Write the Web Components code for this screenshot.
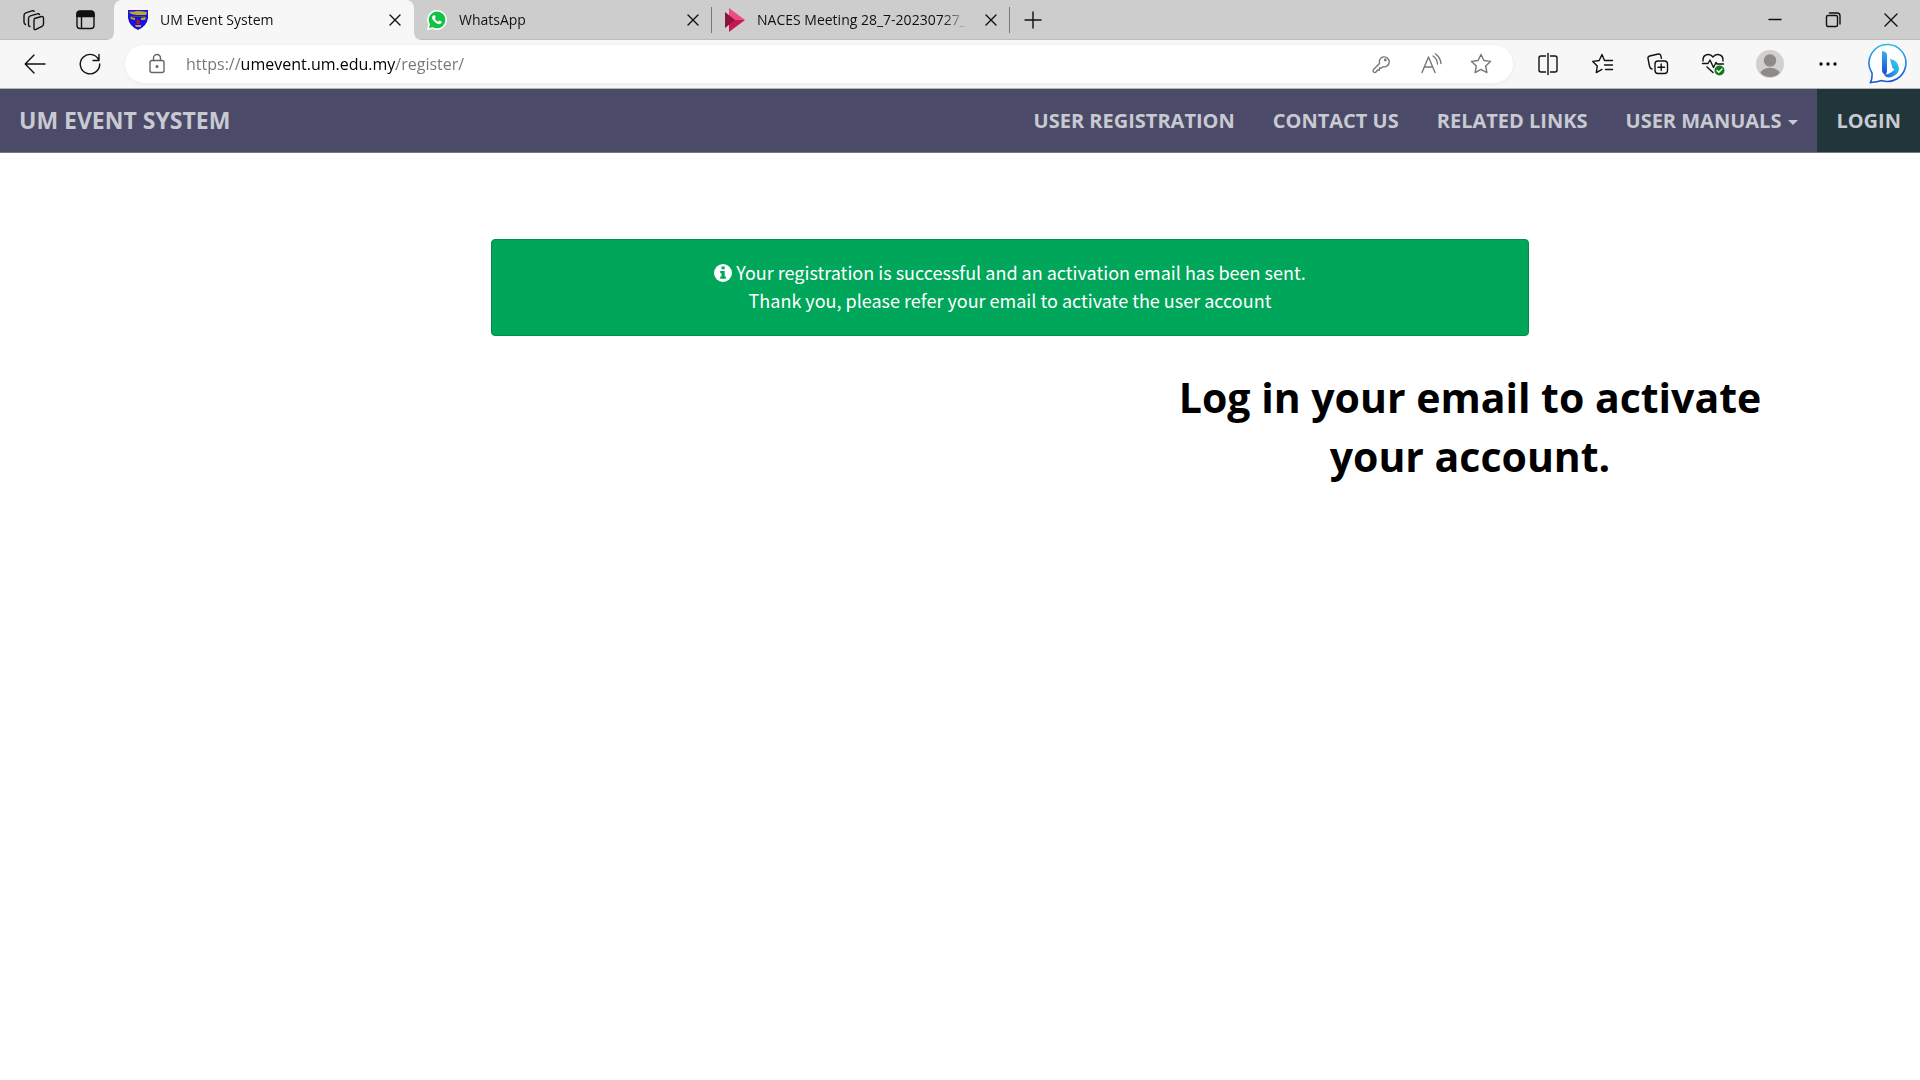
<!DOCTYPE html>
<html lang="en">
<head>
<meta charset="utf-8">
<title>UM Event System</title>
<style>
  body {
    margin: 0;
    background: #fff;
    font-family: "Open Sans", "Noto Sans", sans-serif;
  }
</style>
</head>
<body>
<um-browser>
  <um-tab slot="tab" label="UM Event System" active>
    <svg slot="icon" width="20" height="20" viewBox="0 0 20 20">
      <path fill="#fff" d="M0 0h20v20H0z"/>
      <path fill="#1a12e0" d="M0 0h20v8q-1 8-10 12Q1 16 0 8z"/>
      <path fill="#b9ad1c" d="M1 1.500q4 .5 8-.5 5 0 10 1l-1 3H9L3 4zM2 7l5 1v2L3 9zM13 8l5-1-1 3h-4zM7 15h6v2H8z"/>
      <path fill="#c0182a" d="M8.500 10h3v4h-3z"/>
      <path fill="#4a4a50" d="M3 6h14v1H3z"/>
    </svg>
  </um-tab>
  <um-tab slot="tab" label="WhatsApp">
    <svg slot="icon" width="20" height="20" viewBox="0 0 20 20">
      <path fill="#fff" d="M10 0a10 10 0 1 1-4.600 18.900L0 20l1.300-5.200A10 10 0 0 1 10 0z"/>
      <path fill="#12c245" d="M10 1.500a8.400 8.400 0 1 1-4.200 15.700L2 18.100l1-3.800A8.400 8.400 0 0 1 10 1.500z"/>
      <path fill="#fff" d="M6.600 5.200q.8-.6 1.300.2l.8 1.900-.9 1.300q1 2.200 3.300 3.100l1.200-1.300 2.400 1.200q.3 2-2 2.500-1.600.3-4.300-1.500-3-2.200-3.400-4.600-.1-1.700 1.600-2.800z"/>
    </svg>
  </um-tab>
  <um-tab slot="tab" label="NACES Meeting 28_7-20230727_">
    <svg slot="icon" width="20" height="24" viewBox="0 0 20 24">
      <path fill="#f04a80" d="M4 0l16 12H4z"/>
      <path fill="#c41a50" d="M4 24l16-12H4z"/>
      <path fill="#8e1440" d="M0 4l10 8-10 8z"/>
    </svg>
  </um-tab>
</um-browser>
<um-navbar>
  <a slot="brand" href="#">UM EVENT SYSTEM</a>
  <um-nav-item>USER REGISTRATION</um-nav-item>
  <um-nav-item>CONTACT US</um-nav-item>
  <um-nav-item>RELATED LINKS</um-nav-item>
  <um-nav-item dropdown>USER MANUALS</um-nav-item>
  <um-nav-item highlight>LOGIN</um-nav-item>
</um-navbar>
<main>
  <um-alert>Your registration is successful and an activation email has been sent.<br>Thank you, please refer your email to activate the user account</um-alert>
  <um-note>Log in your email to activate<br>your account.</um-note>
</main>

<script>
/**
 * Build a template from markup.
 *
 * @param {string} html - Markup and styles of the shadow root.
 * @return {HTMLTemplateElement}
 */
function createTemplate(html) {
  const template = document.createElement("template");
  template.innerHTML = html;
  return template;
}

/** Base class: clones the template of the subclass into an open shadow root. */
class BaseElement extends HTMLElement {
  constructor() {
    super();
    this.root = this.attachShadow({ mode: "open" });
    this.root.appendChild(this.constructor.template.content.cloneNode(true));
  }
}

/** @const {Object} - Icon shapes, all drawn on a 24px grid. */
const ICONS = {
  workspaces: `<path d="M13.500 10.500l7-2q2-.4 2 1.600v6q0 1.600-1.500 2.300l-6 3q-2 .9-2-1.200v-7.700q0-1.600 .5-2zM9 18.500Q7.500 18.500 7.500 16.500v-6q0-2 1.800-2.700l7-2q1.500-.4 2.200 .700M4.500 16.500Q3 16 3 14V7.500q0-2 1.800-2.700l6.200-2q1.500-.4 2.200 .5"/>`,
  verticalTabs: `<rect x="3" y="3.500" width="17" height="17" rx="3"/><path d="M7.500 8v12M3 8.500h17"/><path d="M3 8V6q0-3 3-3h11q3 0 3 3v2z" fill="currentColor"/>`,
  back: `<path d="M22 12H2.500M11 3l-8.800 9 8.800 9"/>`,
  reload: `<path d="M21 8.500A9.700 9.700 0 1 0 21.700 12M21 2.500v6h-6"/>`,
  lock: `<rect x="5" y="8.500" width="14" height="12" rx="2"/><path d="M8.500 8.500V6a3.500 3.500 0 0 1 7 0v2.500"/><circle cx="12" cy="14.500" r=".8" fill="currentColor"/>`,
  key: `<path d="M10.500 11.500a5 5 0 1 1 3.500 3.200l-1.500 1.300h-2v2h-2l-1.500 2q-1 1-2.500 0-1-1.500 0-2.500z"/><circle cx="16.300" cy="8" r=".7"/>`,
  readAloud: `<path d="M3 20.500L9.500 5 16 20.500M5.500 15h8M14 4q4 2.500 4.500 8M16.500 2q5 3.500 5.500 9.500"/>`,
  star: `<path d="M12 2.500l2.900 6 6.600.9-4.800 4.600 1.200 6.600-5.900-3.200-5.900 3.200L7.300 14 2.500 9.400l6.600-.9z"/>`,
  split: `<path d="M12 1.500v21M9.500 4H5Q3 4 3 6v12q0 2 2 2h4.500M14.500 4H19q2 0 2 2v12q0 2-2 2h-4.500"/>`,
  favorites: `<path d="M14 8.500h-.5L11 2.500 8.200 8.500 1.700 9.400 6.300 14l-1 6.600 5.700-3.200M14 8.500h7.500M13.500 13h8M14.500 17.500h7"/>`,
  collections: `<rect x="9" y="9" width="12.500" height="12.500" rx="3"/><path d="M15.200 12v6.500M12 15.200h6.500M6 17Q4 16.500 3.600 14.500L2 6.500Q1.700 4.500 3.700 4l8.500-2q2-.4 2.600 1.600l.6 2.700"/>`,
  health: `<path d="M2 9q-.5-6 5-6.500Q10 2.300 12 5q2-2.700 5-2.500 5.500.5 5 6.500M1.500 11.500H7l2-3.500 3.500 7.500 2.500-5 1 1.500h6.500M6 15l6 5.500"/><circle cx="18.500" cy="18.500" r="5" fill="#127a18" stroke="none"/><path d="M16 18.500l1.800 1.800L21 17" stroke="#fff"/>`,
  more: `<g fill="currentColor" stroke="none"><circle cx="5" cy="12" r="1.700"/><circle cx="12" cy="12" r="1.700"/><circle cx="19" cy="12" r="1.700"/></g>`,
  close: `<path d="M7 7l10 10M17 7L7 17"/>`,
  add: `<path d="M12 4v16M4 12h16"/>`,
  minimize: `<path d="M6 11.500h12"/>`,
  restore: `<rect x="5.500" y="7.500" width="11" height="11" rx="1.500"/><path d="M8.500 5h7.500q3 0 3 3v8"/>`,
  windowClose: `<path d="M6 6l12 12M18 6L6 18"/>`
};

/** Line icon, chosen by its name attribute. */
class Icon extends BaseElement {
  static template = createTemplate(`
    <style>
      :host {
        display: block;
        width: 24px;
        height: 24px;
      }

      svg {
        display: block;
        fill: none;
        stroke: currentColor;
        stroke-width: 1.4;
        stroke-linecap: round;
        stroke-linejoin: round;
      }
    </style>
    <svg width="24" height="24" viewBox="0 0 24 24" aria-hidden="true"></svg>
  `);

  connectedCallback() {
    this.root.querySelector("svg").innerHTML = ICONS[this.getAttribute("name")];
  }
}

/** Browser tab with icon, title and close button. */
class Tab extends BaseElement {
  static template = createTemplate(`
    <style>
      :host {
        position: relative;
        box-sizing: border-box;
        display: flex;
        align-items: center;
        gap: 12px;
        flex: 0 1 298px;
        min-width: 0;
        height: 40px;
        padding: 0 6px 0 13px;
      }

      :host([active]) {
        flex-basis: 300px;
        padding: 0 7px 0 14px;
        border-radius: 8px 8px 0 0;
        background: #f7f7f7;
      }

      /* Flared feet of the active tab. */
      :host([active])::before,
      :host([active])::after {
        content: "";
        position: absolute;
        bottom: 0;
        width: 6px;
        height: 6px;
      }

      :host([active])::before {
        right: 100%;
        background: radial-gradient(circle at 0 0, #cdcdcd 5px, #f7f7f7 6px);
      }

      :host([active])::after {
        left: 100%;
        background: radial-gradient(circle at 100% 0, #cdcdcd 5px, #f7f7f7 6px);
      }

      :host(:not([active])) {
        border-right: 1px solid transparent;
        border-image: linear-gradient(transparent 20%, #777 20%, #777 80%, transparent 80%) 1;
      }

      .title {
        flex: 1;
        overflow: hidden;
        white-space: nowrap;
        font-size: 14px;
        line-height: 24px;
        color: #111;
        -webkit-mask-image: linear-gradient(90deg, #000 calc(100% - 24px), transparent);
      }

      button {
        padding: 0;
        border: 0;
        background: none;
        color: #111;
      }
    </style>
    <slot name="icon"></slot>
    <span class="title"></span>
    <button aria-label="Close tab"><um-icon name="close"></um-icon></button>
  `);

  connectedCallback() {
    this.root.querySelector(".title").textContent = this.getAttribute("label");
  }
}

/** Window frame: the tab strip and the toolbar with the address bar. */
class Browser extends BaseElement {
  static template = createTemplate(`
    <style>
      :host {
        display: block;
        border-bottom: 1px solid #b4b4b4;
        background: #f7f7f7;
      }

      .strip,
      .toolbar,
      .address,
      button {
        display: flex;
        align-items: center;
      }

      button {
        flex: none;
        justify-content: center;
        width: 55px;
        height: 40px;
        padding: 0;
        border: 0;
        background: none;
        color: #111;
      }

      .strip {
        height: 40px;
        background: #cdcdcd;
        box-shadow: inset 0 -1px #bdbdbd;
      }

      .actions {
        display: flex;
        box-sizing: border-box;
        width: 114px;
        padding-left: 6px;
      }

      .actions button {
        width: 53px;
      }

      .add {
        width: 46px;
      }

      .window {
        display: flex;
        margin-left: auto;
      }

      .window button {
        width: 58px;
      }

      .toolbar {
        height: 48px;
        padding-left: 7px;
      }

      .address {
        flex: 1;
        height: 38px;
        margin: 0 7px 0 8px;
        padding: 0 7px 0 20px;
        border-radius: 19px;
        background: #fff;
        box-shadow: 0 1px 4px #0000000f;
        color: #666;
      }

      .address um-icon {
        flex: none;
      }

      .address button {
        width: 50px;
        color: #777;
      }

      /* The host name stands out darker than the scheme and the path. */
      input {
        flex: 1;
        min-width: 0;
        margin-left: 17px;
        padding: 0;
        border: 0;
        outline: 0;
        font: 16px/24px "Open Sans", "Noto Sans", sans-serif;
        color: #757575;
        background: linear-gradient(90deg, #757575 55px, #000 55px, #000 210px, #757575 210px);
        -webkit-background-clip: text;
        background-clip: text;
        -webkit-text-fill-color: transparent;
      }

      .profile {
        width: 60px;
      }

      .bing {
        width: 65px;
      }
    </style>
    <div class="strip">
      <div class="actions">
        <button aria-label="Workspaces"><um-icon name="workspaces"></um-icon></button>
        <button aria-label="Tab actions"><um-icon name="verticalTabs"></um-icon></button>
      </div>
      <slot name="tab"></slot>
      <button class="add" aria-label="New tab"><um-icon name="add"></um-icon></button>
      <div class="window">
        <button aria-label="Minimize"><um-icon name="minimize"></um-icon></button>
        <button aria-label="Restore"><um-icon name="restore"></um-icon></button>
        <button aria-label="Close"><um-icon name="windowClose"></um-icon></button>
      </div>
    </div>
    <div class="toolbar">
      <button aria-label="Back"><um-icon name="back"></um-icon></button>
      <button aria-label="Refresh"><um-icon name="reload"></um-icon></button>
      <div class="address">
        <um-icon name="lock"></um-icon>
        <input type="text" aria-label="Address" value="https://umevent.um.edu.my/register/" spellcheck="false">
        <button aria-label="Passwords"><um-icon name="key"></um-icon></button>
        <button aria-label="Read aloud"><um-icon name="readAloud"></um-icon></button>
        <button aria-label="Add to favorites"><um-icon name="star"></um-icon></button>
      </div>
      <button aria-label="Split screen"><um-icon name="split"></um-icon></button>
      <button aria-label="Favorites"><um-icon name="favorites"></um-icon></button>
      <button aria-label="Collections"><um-icon name="collections"></um-icon></button>
      <button aria-label="Browser essentials"><um-icon name="health"></um-icon></button>
      <button class="profile" aria-label="Profile">
        <svg width="28" height="28" viewBox="0 0 28 28">
          <clipPath id="round"><circle cx="14" cy="14" r="13"/></clipPath>
          <circle cx="14" cy="14" r="14" fill="#d2d0ce"/>
          <g fill="#8d8a88" clip-path="url(#round)"><circle cx="14" cy="10.500" r="6.200"/><ellipse cx="14" cy="25" rx="10.500" ry="7.200"/></g>
        </svg>
      </button>
      <button aria-label="Settings"><um-icon name="more"></um-icon></button>
      <button class="bing" aria-label="Bing">
        <svg width="40" height="42" viewBox="0 0 40 42">
          <defs>
            <linearGradient id="ring" x1="0" y1="0" x2="0" y2="1"><stop stop-color="#2bb8ee"/><stop offset="1" stop-color="#1c50d0"/></linearGradient>
            <linearGradient id="stem" x1="0" y1="0" x2="0" y2="1"><stop stop-color="#35b4f4"/><stop offset="1" stop-color="#1747d0"/></linearGradient>
            <linearGradient id="bowl" x1="0" y1="1" x2="1" y2="0"><stop stop-color="#1d5fe0"/><stop offset="1" stop-color="#35dce8"/></linearGradient>
          </defs>
          <path d="M20.500 1.500a18.500 18.500 0 1 1-7 36q-4 1.500-11 2 2-4 1.500-9.500A18.500 18.500 0 0 1 20.500 1.500z" fill="#fff" stroke="url(#ring)" stroke-width="1.600"/>
          <path d="M14 8q5 .5 5 4v16l-1 4q-4-1-4-5z" fill="url(#stem)"/>
          <path d="M22 16q8 1 9 9 0 4-3 6.500-8 6-12.500 0 5 1 11-5l-2-1.500z" fill="url(#bowl)"/>
        </svg>
      </button>
    </div>
  `);
}

/** Top navigation bar of the site. */
class Navbar extends BaseElement {
  static template = createTemplate(`
    <style>
      :host {
        display: flex;
        align-items: center;
        justify-content: space-between;
        border-bottom: 1px solid #77778c;
        background: #4b4b69;
      }

      ::slotted(a) {
        padding: 0 0 2px 19px;
        font-size: 23px;
        font-weight: 700;
        line-height: 32px;
        color: #c9c9d2;
        text-decoration: none;
      }

      nav {
        display: flex;
      }
    </style>
    <slot name="brand"></slot>
    <nav><slot></slot></nav>
  `);
}

/** One link of the navigation bar. */
class NavItem extends BaseElement {
  static template = createTemplate(`
    <style>
      :host {
        display: block;
      }

      a {
        display: flex;
        align-items: center;
        gap: 7px;
        height: 63px;
        padding: 0 19px;
        font-size: 20px;
        font-weight: 700;
        line-height: 28px;
        color: #c9c9d2;
        text-decoration: none;
      }

      :host([highlight]) a {
        background: #20363a;
      }

      :host([dropdown]) a::after {
        content: "";
        margin-top: 4px;
        border: 5px solid transparent;
        border-top-color: currentColor;
        border-bottom: 0;
      }
    </style>
    <a href="#"><slot></slot></a>
  `);
}

/** Success message. */
class Alert extends BaseElement {
  static template = createTemplate(`
    <style>
      :host {
        display: grid;
        grid-template-columns: 491fr 1038fr 391fr;
        margin-top: 86px;
      }

      p {
        grid-column: 2;
        margin: 0;
        padding: 18px 20px 21px;
        border: 1px solid #008d4c;
        border-radius: 4px;
        background: #00a65a;
        color: #fff;
        font-family: "Noto Sans CJK SC", sans-serif;
        font-size: 18px;
        line-height: 28px;
        text-align: center;
      }

      svg {
        vertical-align: -2px;
      }
    </style>
    <p role="status"><svg width="18" height="18" viewBox="0 0 18 18" aria-hidden="true"><circle cx="9" cy="9" r="9" fill="#fff"/><path fill="#00a65a" d="M7.500 2.500h3.200v2.700H7.500zM6.200 7h4.500v5.500h1.200v2.200H6.200v-2.200h1.300V9.200H6.200z"/></svg> <slot></slot></p>
  `);
}

/** Large instruction under the message. */
class Note extends BaseElement {
  static template = createTemplate(`
    <style>
      :host {
        display: grid;
        grid-template-columns: 17fr 15fr;
        margin-top: 32px;
      }

      h1 {
        grid-column: 2;
        margin: 0;
        font-family: "Open Sans", "Noto Sans", sans-serif;
        font-size: 41px;
        font-weight: 700;
        line-height: 59px;
        text-align: center;
        color: #000;
      }
    </style>
    <h1><slot></slot></h1>
  `);
}

//  Define the web components
customElements.define("um-icon", Icon);
customElements.define("um-tab", Tab);
customElements.define("um-browser", Browser);
customElements.define("um-navbar", Navbar);
customElements.define("um-nav-item", NavItem);
customElements.define("um-alert", Alert);
customElements.define("um-note", Note);
</script>
</body>
</html>
